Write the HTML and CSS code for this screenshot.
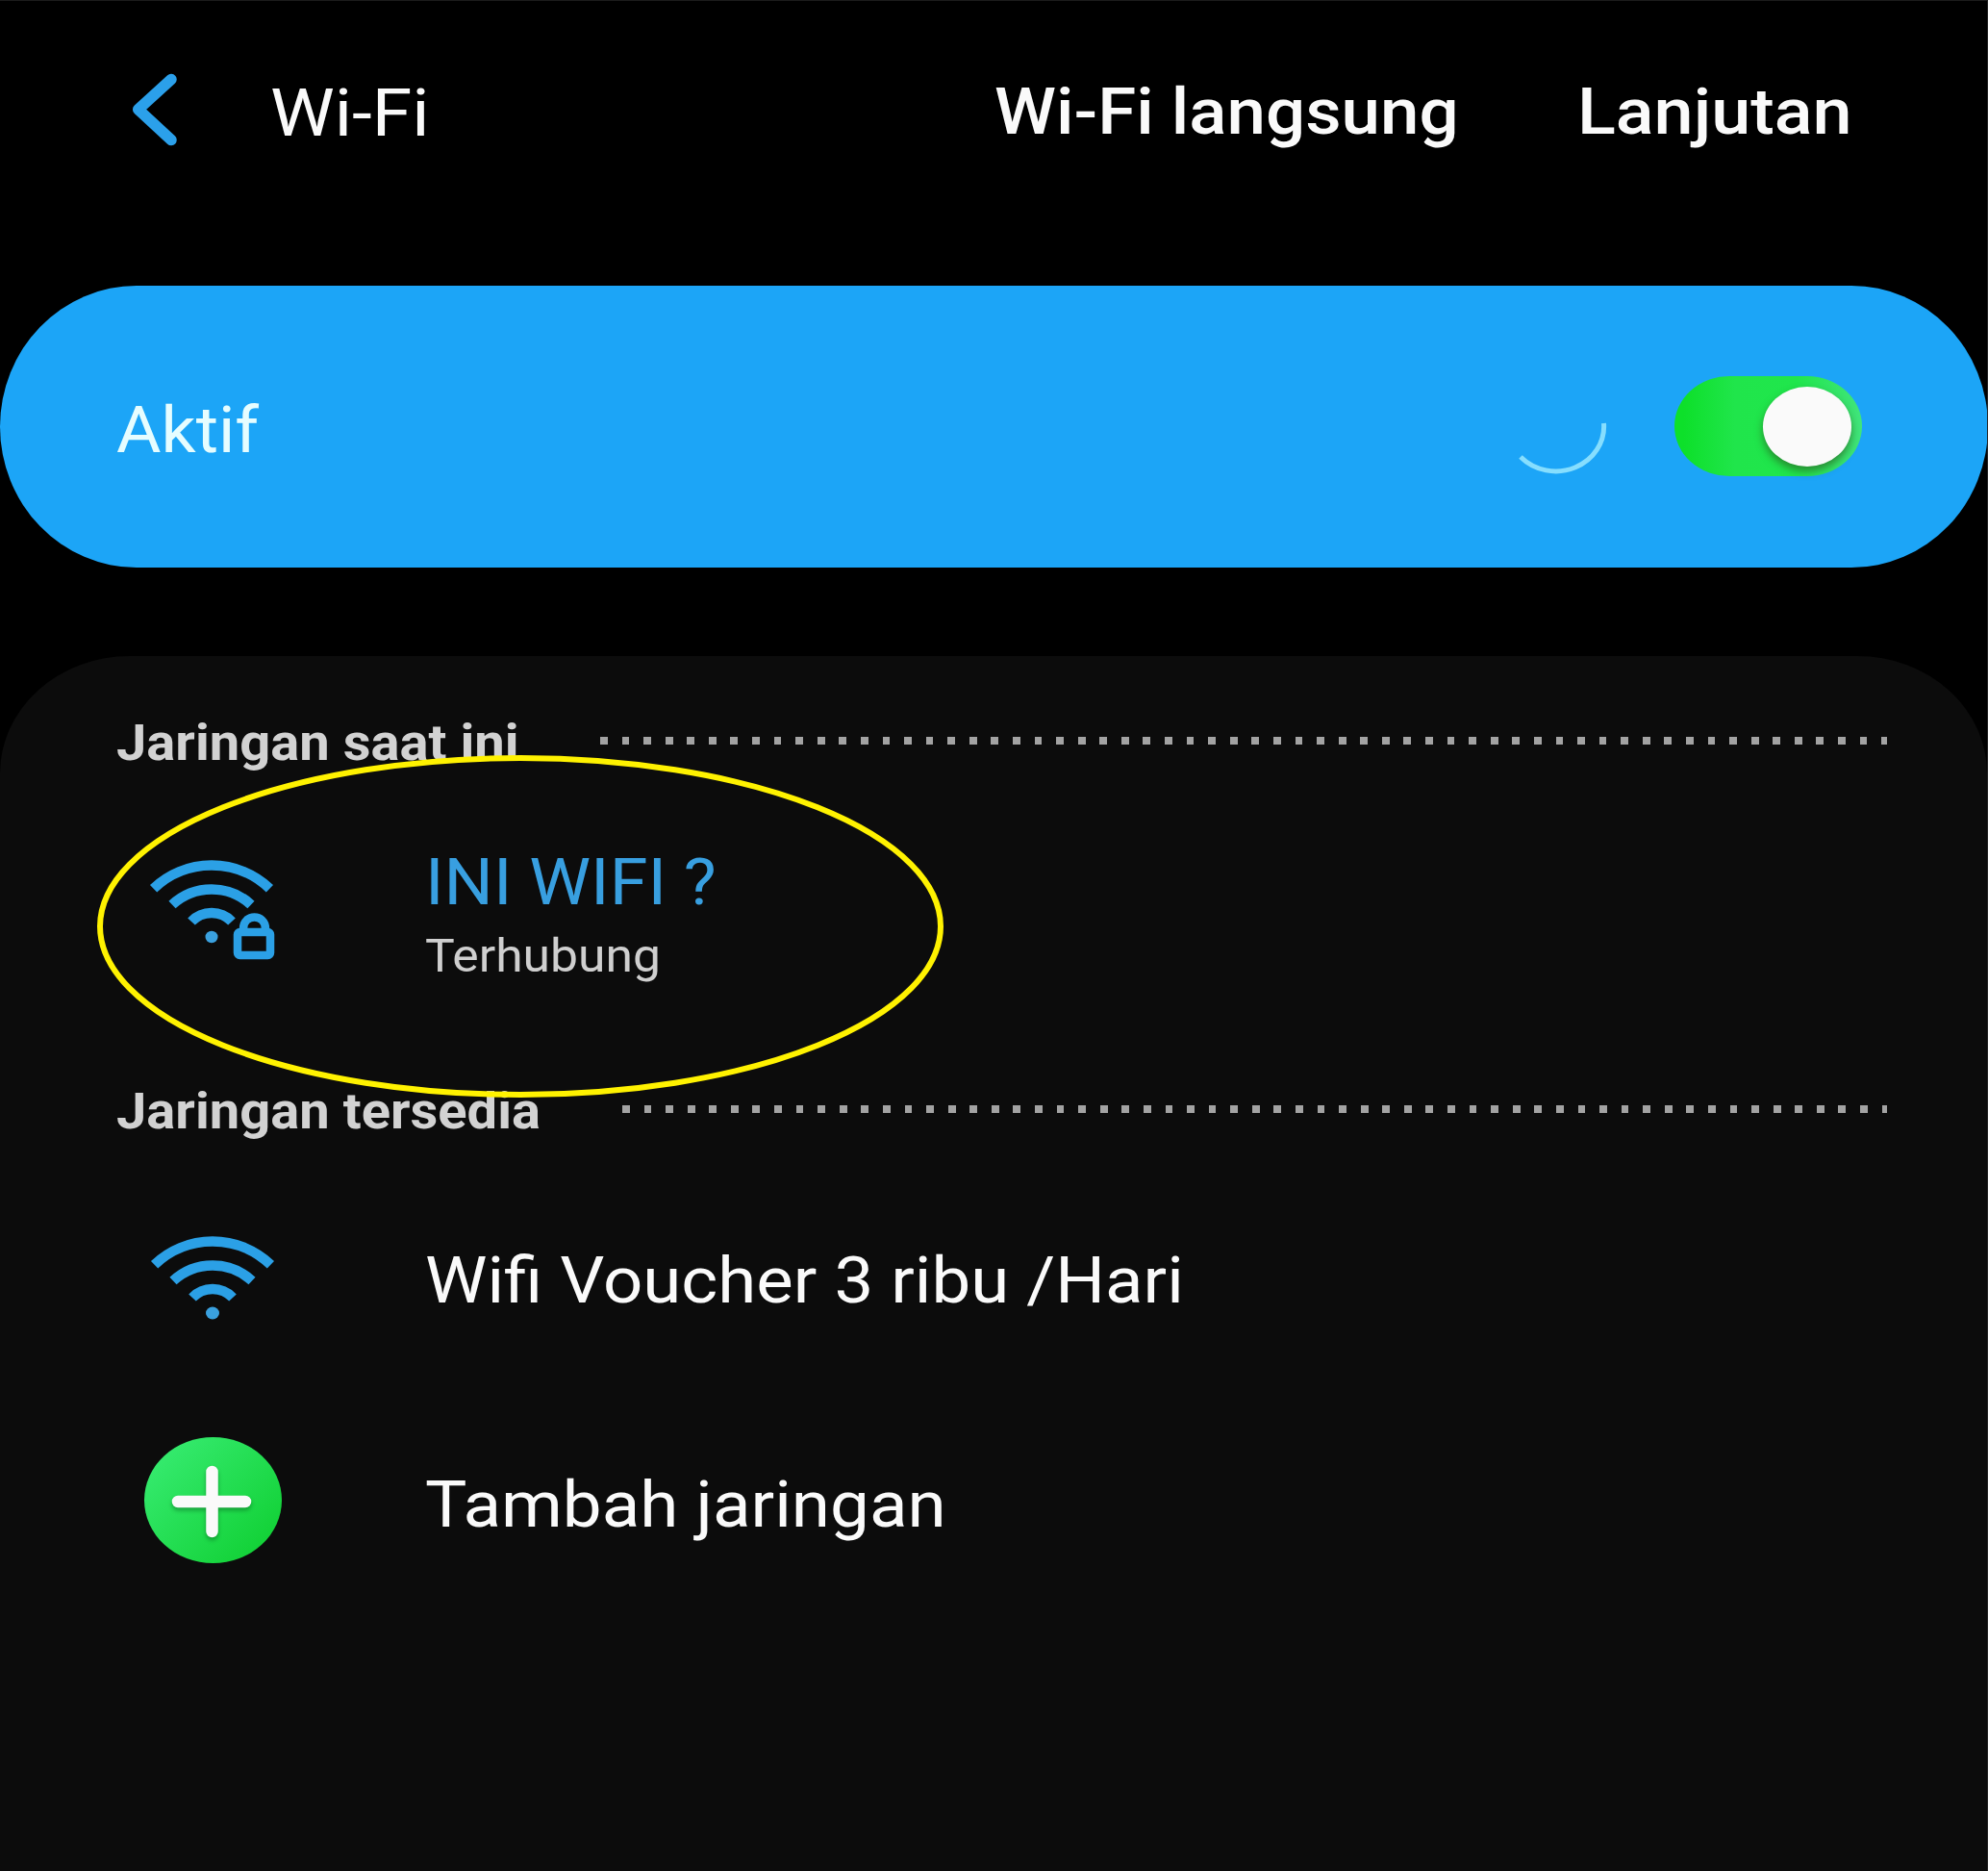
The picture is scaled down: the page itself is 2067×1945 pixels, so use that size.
FILE: index.html
```html
<!DOCTYPE html>
<html lang="id">
<head>
<meta charset="utf-8">
<title>Wi-Fi</title>
<link rel="stylesheet" href="styles.css">
</head>
<body>
<div class="screen">
  <header class="topbar">
    <svg class="back" viewBox="0 0 48 76" aria-hidden="true"><path d="M41 6.500L6.700 37.700L41 69.500"/></svg>
    <h1 class="title"><span class="wide">Wi-Fi</span></h1>
    <div class="action action-direct"><span class="wide">Wi-Fi langsung</span></div>
    <div class="action action-more"><span class="wide">Lanjutan</span></div>
  </header>

  <section class="status">
    <div class="status-label"><span class="wide">Aktif</span></div>
    <svg class="spinner" viewBox="0 0 106 100" aria-hidden="true"><path d="M14 81A50 46.500 0 0 0 100.500 46"/></svg>
    <div class="toggle"><div class="knob"></div></div>
  </section>

  <main class="panel">
    <div class="heading">
      <h2 class="heading-text heading-current"><span class="wide">Jaringan saat ini</span></h2>
      <div class="dots"></div>
    </div>
    <div class="network network-current">
      <svg class="icon wifi" viewBox="0 0 132 106" aria-hidden="true">
        <g class="arcs">
          <path d="M4.600 31.700A87.500 87.500 0 0 1 125.400 31.700"/>
          <path d="M24 48.500A60.500 60.500 0 0 1 106 48.500"/>
          <path d="M44 66A29 29 0 0 1 86 66"/>
        </g>
        <ellipse class="fill" cx="65" cy="82" rx="6.500" ry="6.200"/>
        <path class="lock" d="M98 76V73.500C98 57.500 121 57.500 121 73.500V76"/>
        <rect class="lock" x="92" y="77" width="34" height="24" rx="2.500"/>
      </svg>
      <div class="network-text">
        <div class="name connected"><span class="wide">INI WIFI ?</span></div>
        <div class="sub"><span class="wide">Terhubung</span></div>
      </div>
      <svg class="ring" viewBox="0 0 880 356" aria-hidden="true"><ellipse cx="440" cy="178" rx="437" ry="175"/></svg>
    </div>
    <div class="heading">
      <h2 class="heading-text heading-available"><span class="wide">Jaringan tersedia</span></h2>
      <div class="dots"></div>
    </div>
    <div class="network network-open">
      <svg class="icon wifi" viewBox="0 0 132 106" aria-hidden="true">
        <g class="arcs">
          <path d="M4.600 31.700A87.500 87.500 0 0 1 125.400 31.700"/>
          <path d="M24 48.500A60.500 60.500 0 0 1 106 48.500"/>
          <path d="M44 66A29 29 0 0 1 86 66"/>
        </g>
        <ellipse class="fill" cx="65" cy="82" rx="7" ry="6.500"/>
      </svg>
      <div class="name"><span class="wide">Wifi Voucher 3 ribu /Hari</span></div>
    </div>
    <div class="network network-add">
      <div class="icon add"><svg viewBox="0 0 144 132" aria-hidden="true"><path d="M35 67H105M70.500 36V98"/></svg></div>
      <div class="name"><span class="wide">Tambah jaringan</span></div>
    </div>
  </main>
</div>
</body>
</html>
```
FILE: styles.css
```css
* { box-sizing: border-box; }

body {
  margin: 0;
  background: #000;
  color: #fafafa;
  font-family: Roboto, "Liberation Sans", sans-serif;
}

.screen {
  display: flex;
  flex-direction: column;
  width: 2067px;
  height: 1945px;
  overflow: hidden;
  border-top: 1px solid #1c1c1c;
  border-right: 1px solid #262626;
}

h1, h2 { margin: 0; font-weight: 400; }

/* Letterforms are set slightly extended */
.wide {
  display: inline-block;
  white-space: nowrap;
  transform: scaleX(var(--stretch, 1.1));
  transform-origin: 0 50%;
}

.topbar {
  display: grid;
  grid-template-columns: 144px 753px 606px 300px;
  height: 296px;
  padding: 78px 0 0 137px;
  line-height: 78px;
}
.back { width: 48px; height: 76px; margin-top: -3px; }
.back path {
  fill: none;
  stroke: #2ba0ea;
  stroke-width: 11.5;
  stroke-linecap: round;
  stroke-linejoin: round;
}
.title { --stretch: 1.09; font-size: 69px; }
.action { margin-top: -1px; font-size: 66px; font-weight: 500; }
.action-direct { --stretch: 1.101; }
.action-more { --stretch: 1.118; }

.status {
  display: flex;
  align-items: center;
  width: 2067px;
  height: 293px;
  padding: 0 131px 0 121px;
  background: #1ca5f7;
  border-radius: 142px / 146.5px;
}
.status-label {
  --stretch: 1.08;
  flex: 1;
  padding-top: 9px;
  color: #e6fdff;
  font-size: 66px;
  line-height: 78px;
}
.spinner { width: 106px; height: 100px; margin-right: 68px; }
.spinner path {
  fill: none;
  stroke: #86defe;
  stroke-width: 5;
}
.toggle {
  width: 195px;
  height: 104px;
  margin-top: -2px;
  padding: 11px 0 0 92px;
  border-radius: 57px / 52px;
  background: linear-gradient(90deg, #0de02a 5%, #20e54b 32%, #20e64c 65%, #41e57c);
}
.knob {
  width: 92px;
  height: 83px;
  border-radius: 50%;
  background: #fafafa;
  box-shadow: 0 5px 9px rgba(40, 90, 30, 0.65);
}

.panel {
  flex: 1;
  margin-top: 92px;
  padding: 61px 104px 0 121px;
  background: #0c0c0c;
  border-radius: 135px 135px 0 0 / 122px 122px 0 0;
}
.heading { display: flex; height: 60px; }
.heading-text {
  color: #d2d2d2;
  font-size: 51px;
  font-weight: 700;
  line-height: 60px;
}
.heading-current { width: 503px; }
.heading-available { width: 526px; }
.dots {
  flex: 1;
  height: 8px;
  margin-top: 23px;
  background: repeating-linear-gradient(90deg, #a3a3a3 0 7.800px, transparent 7.800px 22.580px);
}

.network {
  display: grid;
  grid-template-columns: 321px 1fr;
  align-items: start;
}
.network-current { position: relative; z-index: 1; height: 323px; padding-top: 76px; }
.network-open { height: 308px; padding-top: 107px; }
.network-add { --stretch: 1.103; padding-top: 32px; }

.name { font-size: 66px; line-height: 78px; }
.connected { --stretch: 1.09; color: #389fe0; }
.sub {
  --stretch: 1.075;
  margin-top: 9px;
  color: #cfcfcf;
  font-size: 48px;
  line-height: 56px;
}

.wifi { width: 132px; height: 106px; margin-left: 35px; }
.network-current .wifi { margin: 13px 0 0 34px; }
.network-open .wifi { margin-top: -10px; }
.arcs { fill: none; stroke: #2ba0e6; stroke-width: 10.5; }
.fill { fill: #3aa1df; }
.lock { fill: none; stroke: #2ba0e6; stroke-width: 8.5; }

.add {
  width: 143px;
  height: 131px;
  margin: -32px 0 0 29px;
  border-radius: 50%;
  background: linear-gradient(135deg, #35ea6e 12%, #12d136 88%);
}
.add svg { display: block; width: 144px; height: 132px; }
.add path {
  fill: none;
  stroke: #fafafa;
  stroke-width: 12.5;
  stroke-linecap: round;
  filter: drop-shadow(0 3px 2px rgba(0, 70, 20, 0.4));
}

/* Hand-drawn highlight round the connected network */
.ring {
  position: absolute;
  top: -18px;
  left: -20px;
  width: 880px;
  height: 356px;
}
.ring ellipse { fill: none; stroke: #fff200; stroke-width: 6; }
```
